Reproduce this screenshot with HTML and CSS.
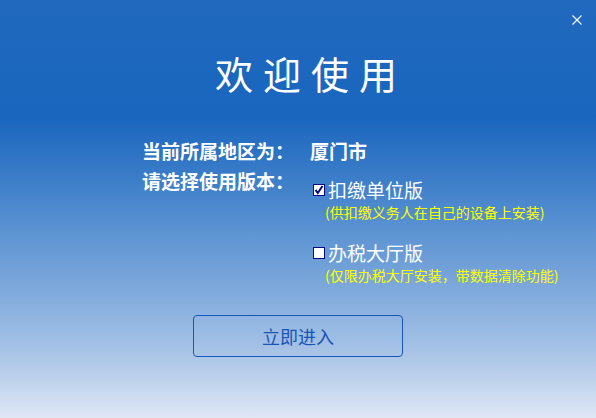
FILE: index.html
```html
<!DOCTYPE html>
<html lang="zh-CN">
<head>
<meta charset="utf-8">
<title>欢迎使用</title>
<link rel="stylesheet" href="styles.css">
</head>
<body>
<div class="window">
  <button class="close" aria-label="关闭">
    <svg width="10" height="10" viewBox="0 0 10 10"><path d="M0.5 0.5 L9.5 9.5 M9.5 0.5 L0.5 9.5" stroke="#ffffff" stroke-width="1.1" fill="none"/></svg>
  </button>
  <h1 class="title">欢迎使用</h1>
  <div class="form">
    <div class="label">当前所属地区为：</div>
    <div class="value">厦门市</div>
    <div class="label">请选择使用版本：</div>
    <div class="options">
      <div class="opt">
        <div class="opt-line">
          <span class="box"><svg width="10" height="10" viewBox="0 0 10 10"><path d="M1.5 4.8 L3.8 8 L8.5 1" stroke="#0a0a80" stroke-width="2" fill="none"/></svg></span>
          <span class="opt-name">扣缴单位版</span>
        </div>
        <div class="opt-note">(供扣缴义务人在自己的设备上安装)</div>
      </div>
      <div class="opt">
        <div class="opt-line">
          <span class="box"></span>
          <span class="opt-name">办税大厅版</span>
        </div>
        <div class="opt-note">(仅限办税大厅安装，带数据清除功能)</div>
      </div>
    </div>
  </div>
  <div class="actions">
    <button class="enter">立即进入</button>
  </div>
</div>
</body>
</html>
```

FILE: styles.css
```css
html, body {
  margin: 0;
  padding: 0;
}
body {
  font-family: "Noto Sans CJK SC", "Noto Sans", sans-serif;
}
.window {
  position: relative;
  width: 596px;
  height: 418px;
  overflow: hidden;
  box-sizing: border-box;
  padding-top: 54px;
  background: linear-gradient(to bottom,
    #2069be 0%,
    #1a66be 28%,
    #3a7cc8 42%,
    #5b93d2 55%,
    #80aadc 70%,
    #a7c3e6 84%,
    #dfe7f5 100%);
}
.close {
  position: absolute;
  top: 15px;
  right: 14px;
  width: 10px;
  height: 10px;
  padding: 0;
  border: 0;
  background: transparent;
  display: block;
}
.close svg {
  display: block;
}
.title {
  margin: 0;
  padding-left: 26px;
  text-align: center;
  font-size: 38px;
  line-height: 38px;
  font-weight: 400;
  letter-spacing: 10px;
  color: #ffffff;
}
.form {
  display: grid;
  grid-template-columns: 168px auto;
  row-gap: 11px;
  margin: 49px 0 0 142px;
  color: #ffffff;
}
.label, .value {
  font-size: 19px;
  line-height: 19px;
  font-weight: 700;
}
.options {
  padding-top: 9px;
  margin-left: 3px;
  display: flex;
  flex-direction: column;
  gap: 24px;
}
.opt-line {
  display: flex;
  align-items: center;
  gap: 3px;
}
.box {
  width: 12px;
  height: 12px;
  box-sizing: border-box;
  border: 1px solid #0a0a80;
  background: #ffffff;
  display: flex;
  align-items: center;
  justify-content: center;
}
.box svg {
  display: block;
}
.opt-name {
  font-size: 19px;
  line-height: 19px;
  font-weight: 400;
}
.opt-note {
  margin-top: 6px;
  margin-left: 12px;
  font-size: 14px;
  line-height: 14px;
  color: #ffff00;
}
.actions {
  display: flex;
  justify-content: center;
  margin-top: 33px;
}
.enter {
  width: 210px;
  height: 42px;
  box-sizing: border-box;
  border: 1.5px solid #1258bd;
  border-radius: 4px;
  background: transparent;
  color: #1a55b5;
  font-family: "Noto Sans CJK SC", "Noto Sans", sans-serif;
  font-size: 18px;
  line-height: 18px;
  padding: 0;
}
```
